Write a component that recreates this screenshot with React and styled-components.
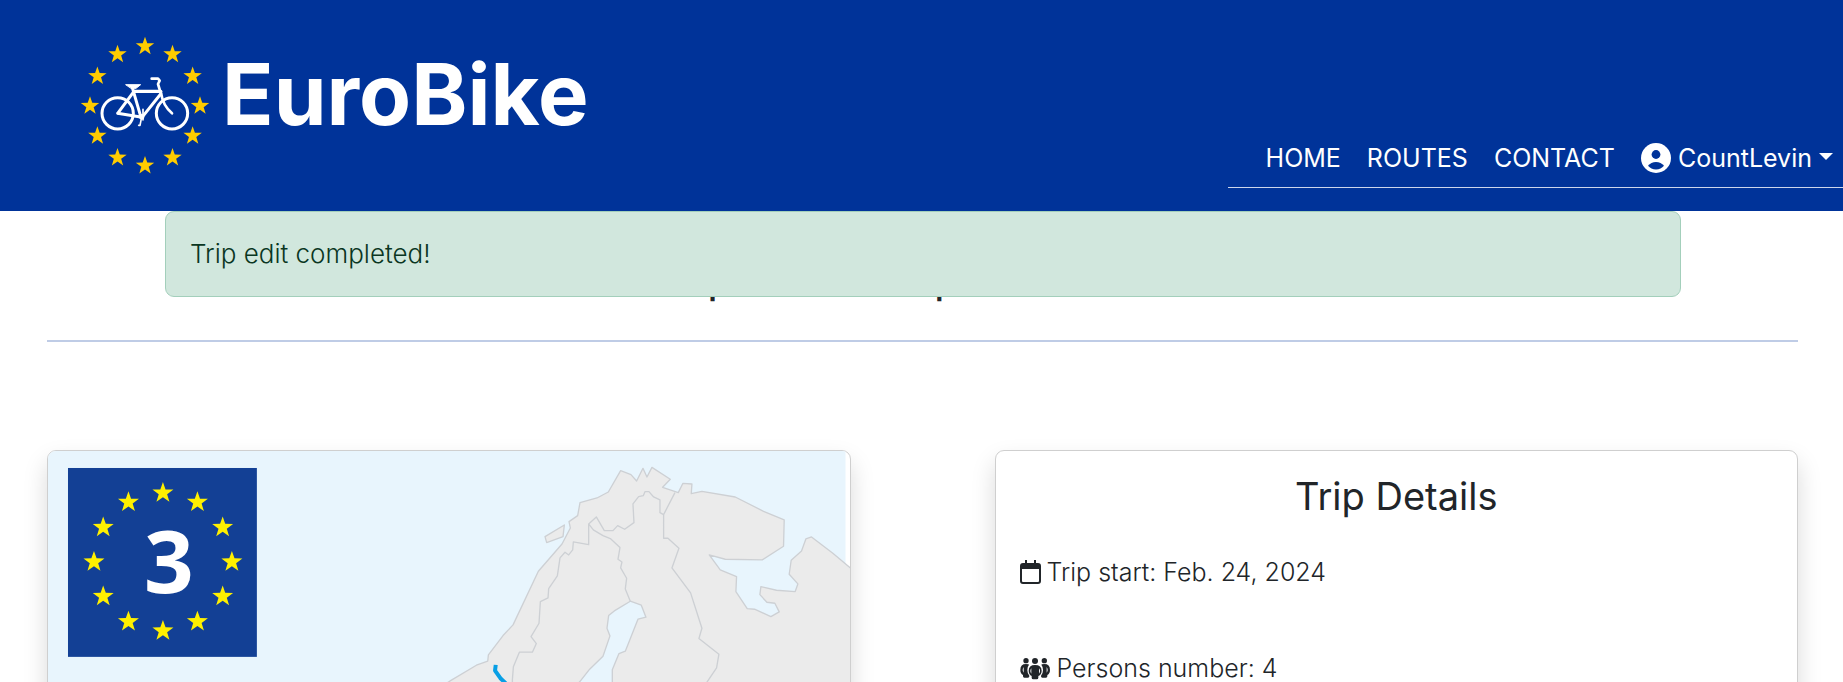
import React from "react";
import styled, { createGlobalStyle } from "styled-components";

const Global = createGlobalStyle`
  *, *::before, *::after { box-sizing: border-box; }
  body {
    margin: 0;
    background: #fff;
    color: #212529;
    font-family: Inter, "Liberation Sans", sans-serif;
    font-size: 25px;
    font-weight: 300;
    line-height: 36px;
  }
  h1, h2, p, ul { margin: 0; padding: 0; }
`;

const Page = styled.div`
  display: flex;
  flex-direction: column;
  height: 100vh;
  overflow: hidden;
`;

const Header = styled.header`
  display: flex;
  flex: none;
  justify-content: space-between;
  align-items: flex-start;
  padding: 30px 0 23px 80px;
  background: #003399;
  color: #fff;
`;

const Brand = styled.a`
  display: flex;
  align-items: flex-start;
  gap: 2px;
  padding-bottom: 12px;
  color: inherit;
  text-decoration: none;
`;

const BrandName = styled.span`
  padding-top: 15px;
  font-size: 85px;
  font-weight: 700;
  line-height: 100px;
`;

const Nav = styled.nav`
  align-self: flex-end;
  padding: 0 10px 11px 38px;
  border-bottom: 1px solid #ccd6eb;
`;

const NavList = styled.ul`
  display: flex;
  gap: 26px;
  list-style: none;
`;

const NavLink = styled.a`
  color: #fff;
  font-weight: 400;
  text-decoration: none;
`;

const UserButton = styled.button`
  display: flex;
  align-items: center;
  gap: 7px;
  padding: 0;
  border: 0;
  background: none;
  color: #fff;
  font: inherit;
  font-weight: 400;
`;

const Caret = styled.span`
  margin-bottom: 4px;
  border: 7px solid transparent;
  border-top-color: #fff;
  border-bottom: 0;
`;

const Main = styled.main`
  position: relative;
  flex: 1 0 auto;
  padding: 45px 45px 0 47px;
`;

const AlertLayer = styled.div`
  position: absolute;
  inset: 0 0 auto;
  padding: 0 162px 0 165px;
`;

const Alert = styled.div`
  padding: 24px;
  border: 1px solid #a3cfbb;
  border-radius: 9px;
  background: #d1e7dd;
  color: #0a3622;
  font-size: 26px;
`;

const Title = styled.h1`
  font-size: 38px;
  font-weight: 500;
  line-height: 48px;
  text-align: center;
`;

const Rule = styled.hr`
  height: 2px;
  margin: 36px 0 108px;
  border: 0;
  background: #bfcce6;
`;

const Cards = styled.div`
  display: grid;
  grid-template-columns: 1fr 1fr;
  gap: 144px;
`;

const Card = styled.section`
  height: 900px;
  overflow: hidden;
  border: 1px solid #cfcfcf;
  border-radius: 9px;
  background: #fff;
  box-shadow: 0 12px 24px rgba(0, 0, 0, 0.15);
`;

const Details = styled(Card)`
  padding: 24px;
`;

const CardTitle = styled.h2`
  margin-bottom: 36px;
  font-size: 38px;
  font-weight: 400;
  line-height: 43px;
  text-align: center;
`;

const Detail = styled.p`
  display: flex;
  align-items: center;
  gap: 6px;
  margin-bottom: 60px;
`;

const MapSvg = styled.svg`
  display: block;
  width: 100%;
`;

const starPoints = (cx, cy, r) =>
  Array.from({ length: 10 }, (_, i) => {
    const a = (Math.PI * i) / 5;
    const d = i % 2 ? r * 0.4 : r;
    return `${(cx + d * Math.sin(a)).toFixed(1)},${(cy - d * Math.cos(a)).toFixed(1)}`;
  }).join(" ");

function StarRing({ cx, cy, rx, ry, size, color }) {
  return Array.from({ length: 12 }, (_, i) => {
    const a = (Math.PI * i) / 6;
    return (
      <polygon
        key={i}
        fill={color}
        points={starPoints(cx + rx * Math.sin(a), cy - ry * Math.cos(a), size)}
      />
    );
  });
}

function Logo() {
  return (
    <svg width="140" height="146" viewBox="60 30 420 438" aria-hidden="true">
      <StarRing cx={255} cy={258} rx={165} ry={179} size={29} color="#ffcc00" />
      <g fill="none" stroke="#fff" strokeWidth="9" strokeLinecap="round" strokeLinejoin="round">
        <circle cx="173" cy="280" r="47" />
        <circle cx="336" cy="280" r="47" />
        <path d="M173 280 222 214M217 203 243 292M302 222 246 292 173 280" />
        <path d="M222 214H302" strokeWidth="10" />
        <path d="M303 218Q308 256 336 280M275 176H294L299 182 294 192 303 222" strokeWidth="8" />
        <path d="M249 268V300M244 296 240 316H236" strokeWidth="5" />
        <path d="M198 194H242L228 205H214Z" fill="#fff" strokeWidth="3" />
        <circle cx="245" cy="290" r="8" fill="#fff" stroke="none" />
      </g>
    </svg>
  );
}

function RouteMap() {
  return (
    <MapSvg viewBox="0 0 802 900" role="img" aria-label="Map of cycling route 3">
      <rect width="798" height="900" fill="#e8f5fd" />
      <g transform="translate(352 -11) scale(.33333)" stroke="#cdd0d4" strokeWidth="4" strokeLinejoin="round">
        <path
          fill="#ebebeb"
          d="M-200 950 150 724 230 676 264 664 266 645 310 587 340 555 416 394 487 312 512 264 508 245 534 227 541 188 592 174 626 156 663 92 694 104 711 123 730 85 742 111 757 82 812 118 789 142 836 158 850 130 877 132 875 161 907 154 1007 171 1092 214 1154 240 1152 319 1088 360 977 358 929 345 962 390 1011 410 1009 455 1043 506 1065 508 1114 530 1139 516 1126 490 1102 487 1081 464 1084 440 1131 451 1187 455 1195 432 1169 403 1175 361 1206 333 1219 297 1236 291 1300 340 1360 390V2000H-200Z"
        />
        <path fill="#ebebeb" d="M436 290 494 255 490 290 441 308Z" />
        <path
          fill="#e8f5fd"
          d="M440 820 540 726 570 688 610 649 631 588 622 565 627 527 644 513 692 484 725 496 739 532 715 538 677 634 658 641 638 690V1000H440Z"
        />
        <path
          fill="none"
          d="M338 760V720L341 681 359 637H398L410 611 394 590 418 550 422 485 445 474 447 446 473 408 481 354 496 337 507 345 519 330 521 306 567 314V252L590 231 614 272H640L654 257 675 268 703 248 700 192 717 170 731 167 736 155H748L762 171 781 180V218L792 224 826 158M567 252 581 270 610 287 632 296 661 323 655 358 667 366 663 384 681 415 677 447 692 484M792 224V295H805L838 325 817 384 873 459 907 565 898 596 958 643 951 684 920 730"
        />
        <path d="M288 675 286 692 302 715 330 742 350 780" fill="none" stroke="#089fe5" strokeWidth="12" />
      </g>
      <rect x="20" y="17" width="189" height="189" fill="#134095" />
      <StarRing cx={115} cy={111} rx={69} ry={69} size={11} color="#fff000" />
      <text x="121" y="142" textAnchor="middle" fill="#fff" fontFamily="Open Sans, sans-serif" fontWeight="700" fontSize="87">
        3
      </text>
    </MapSvg>
  );
}

function UserIcon() {
  return (
    <svg width="30" height="30" viewBox="0 0 30 30" aria-hidden="true">
      <circle cx="15" cy="15" r="15" fill="#fff" />
      <g fill="#003399">
        <circle cx="15" cy="11.500" r="4.400" />
        <path d="M7 22.800Q10 19 15 19T23 22.800Q20 26.500 15 26.500T7 22.800Z" />
      </g>
    </svg>
  );
}

function CalendarIcon() {
  return (
    <svg width="21" height="24" viewBox="0 0 21 24" aria-hidden="true">
      <rect x="1" y="4" width="19" height="19" rx="2" fill="none" stroke="currentColor" strokeWidth="2" />
      <path d="M1 4H20V9H1ZM5 0H7V4H5ZM14 0H16V4H14Z" fill="currentColor" />
    </svg>
  );
}

function PeopleIcon() {
  return (
    <svg width="31" height="23" viewBox="28 316 93 69" fill="currentColor" aria-hidden="true">
      <circle cx="46" cy="327" r="8" />
      <circle cx="73" cy="328" r="9" />
      <circle cx="101" cy="327" r="8" />
      <path d="M53 338Q29 334 29 355 29 366 37 370V374Q37 378 41 378H52Q56 378 56 374V372Q50 366 50 355 50 345 55 339ZM39 346V363Q33 355 39 346Z" fillRule="evenodd" />
      <path d="M94 338Q118 334 118 355 118 366 110 370V374Q110 378 106 378H95Q91 378 91 374V372Q97 366 97 355 97 345 92 339ZM108 346V363Q114 355 108 346Z" fillRule="evenodd" />
      <path d="M73 340Q54 340 54 357 54 368 63 373V378Q63 383 68 383H78Q83 383 83 378V373Q93 368 93 357 93 340 73 340ZM62 350V366Q56 358 62 350ZM85 350V366Q91 358 85 350Z" fillRule="evenodd" />
    </svg>
  );
}

export default function App() {
  return (
    <Page>
      <Global />
      <Header>
        <Brand href="#home">
          <Logo />
          <BrandName>EuroBike</BrandName>
        </Brand>
        <Nav>
          <NavList>
            <li><NavLink href="#home">HOME</NavLink></li>
            <li><NavLink href="#routes">ROUTES</NavLink></li>
            <li><NavLink href="#contact">CONTACT</NavLink></li>
            <li>
              <UserButton type="button">
                <UserIcon />
                CountLevin
                <Caret />
              </UserButton>
            </li>
          </NavList>
        </Nav>
      </Header>
      <Main>
        <Title>Trip Details: Trip to Catalonia</Title>
        <AlertLayer>
          <Alert role="alert">Trip edit completed!</Alert>
        </AlertLayer>
        <Rule />
        <Cards>
          <Card><RouteMap /></Card>
          <Details>
            <CardTitle>Trip Details</CardTitle>
            <Detail><CalendarIcon />Trip start: Feb. 24, 2024</Detail>
            <Detail><PeopleIcon />Persons number: 4</Detail>
          </Details>
        </Cards>
      </Main>
    </Page>
  );
}
